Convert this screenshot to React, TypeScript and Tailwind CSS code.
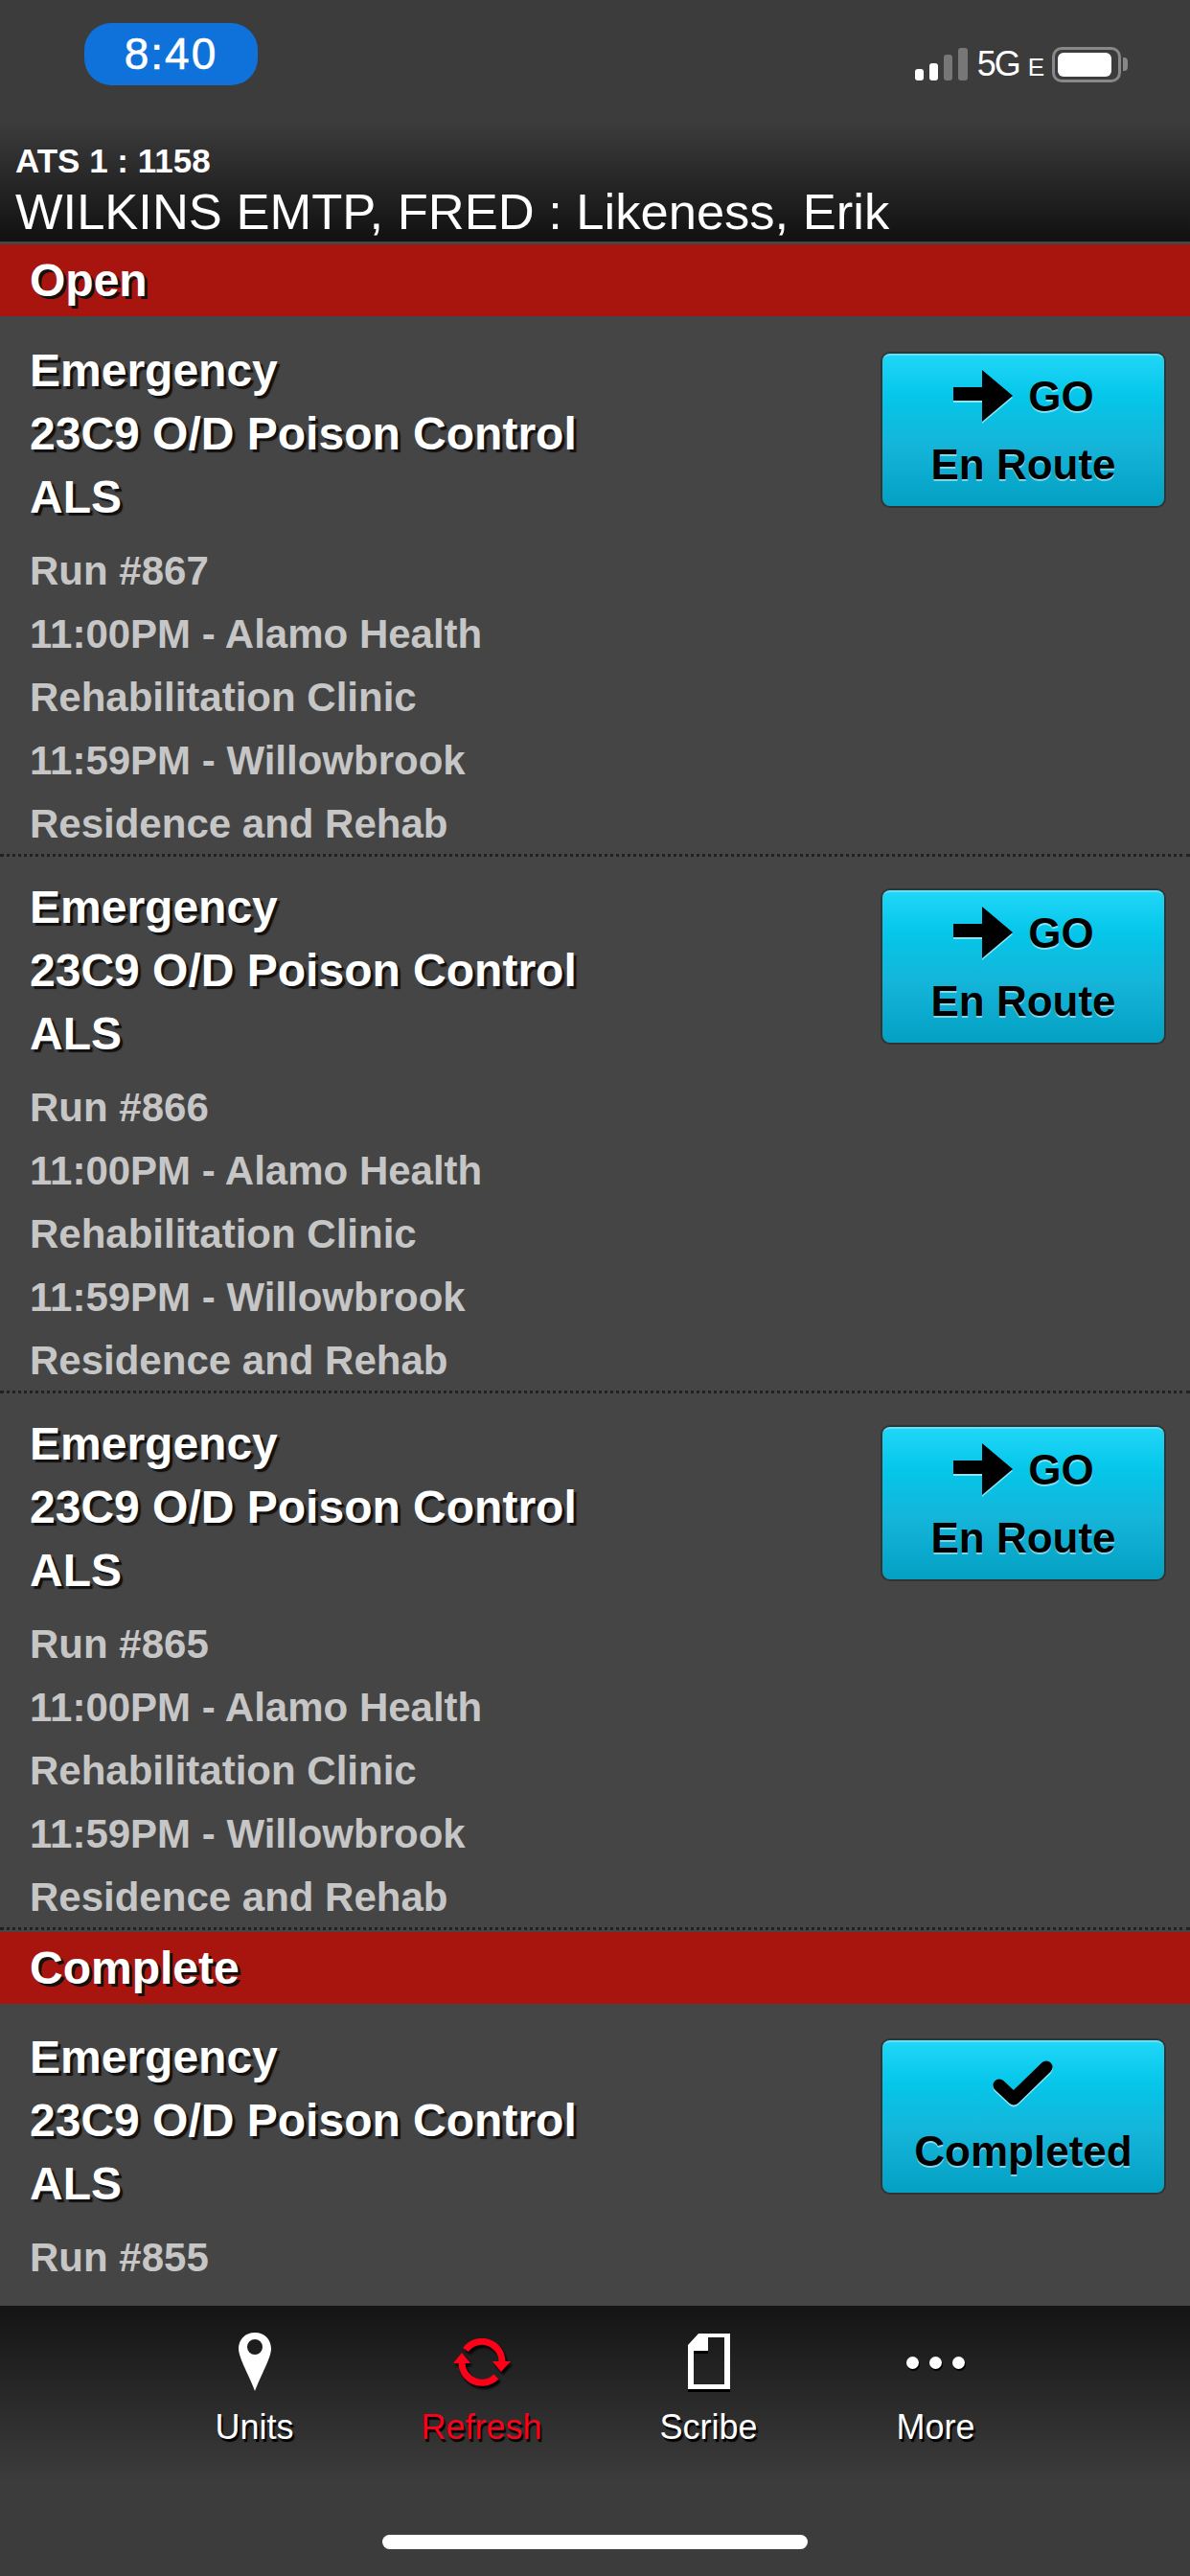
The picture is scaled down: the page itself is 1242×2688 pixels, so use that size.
const FONT = "font-['Liberation_Sans',Arial,sans-serif]";

function ArrowIcon() {
  return (
    <svg width="64" height="58" viewBox="0 0 64 58" className="[filter:drop-shadow(0_2px_0_rgba(255,255,255,0.55))]">
      <path d="M1 19H31V1L63 28L31 55V33H1Z" fill="#000" />
    </svg>
  );
}

function CheckIcon() {
  return (
    <svg width="64" height="50" viewBox="0 0 64 50" className="[filter:drop-shadow(0_2px_0_rgba(255,255,255,0.55))]">
      <path d="M7 27L22 41L56 8" fill="none" stroke="#000" strokeWidth="13" strokeLinecap="round" strokeLinejoin="round" />
    </svg>
  );
}

function ActionButton({ done }: { done?: boolean }) {
  return (
    <div className="flex h-[159px] w-[294px] shrink-0 flex-col items-center rounded-[8px] border-t-2 border-[#5fe2fa] bg-[linear-gradient(180deg,#1fd6f7_0%,#05c6e9_28%,#14b5d9_60%,#03a0c3_100%)] pt-[16px] text-black shadow-[0_0_0_2px_#333333] [text-shadow:0_2px_0_rgba(255,255,255,0.5)]">
      {done ? (
        <div className="flex h-[54px] items-center">
          <CheckIcon />
        </div>
      ) : (
        <div className="flex h-[54px] items-center gap-[15px]">
          <ArrowIcon />
          <span className="text-[44px] font-bold leading-[54px]">GO</span>
        </div>
      )}
      <span className="mt-[17px] text-[44px] font-bold leading-[54px]">{done ? "Completed" : "En Route"}</span>
    </div>
  );
}

function Run({ run, full = true }: { run: string; full?: boolean }) {
  return (
    <div className={`flex justify-between pl-[31px] pr-[27px] pt-[20px] ${full ? "h-[560px] border-b-[3px] border-dotted border-[#222222]" : ""}`}>
      <div className="flex flex-col">
        <div className="flex flex-col pb-[11px] text-[48px] font-bold leading-[66px] text-white [text-shadow:3px_3px_1px_#111111]">
          <span>Emergency</span>
          <span>23C9 O/D Poison Control</span>
          <span>ALS</span>
        </div>
        <div className="flex flex-col text-[42px] font-bold leading-[66px] text-[#c6c6c6]">
          <span>Run #{run}</span>
          {full && (
            <>
              <span>11:00PM - Alamo Health</span>
              <span>Rehabilitation Clinic</span>
              <span>11:59PM - Willowbrook</span>
              <span>Residence and Rehab</span>
            </>
          )}
        </div>
      </div>
      <div className="pt-[15px]">
        <ActionButton done={!full} />
      </div>
    </div>
  );
}

function Section({ title }: { title: string }) {
  return (
    <div className="flex h-[75px] items-center bg-[#a8150f] pl-[31px] text-[48px] font-bold text-white [text-shadow:3px_3px_0_#111111]">
      {title}
    </div>
  );
}

function PinIcon() {
  return (
    <svg width="34" height="62" viewBox="0 0 34 62">
      <path fillRule="evenodd" fill="#fff" d="M17 0C7 0 0 7 0 17C0 26 11 45 17 61C23 45 34 26 34 17C34 7 27 0 17 0ZM17 7A8 8 0 1 1 17 23A8 8 0 1 1 17 7Z" />
    </svg>
  );
}

function RefreshIcon() {
  return (
    <svg width="60" height="50" viewBox="0 0 60 50" fill="none" className="[filter:drop-shadow(2px_3px_1px_#000)]">
      <path d="M13 12A21 21 0 0 1 51 24" stroke="#ff0019" strokeWidth="7" />
      <path d="M45 40A21 21 0 0 1 9 26" stroke="#ff0019" strokeWidth="7" />
      <path d="M0 26L9 15L18 26Z" fill="#ff0019" />
      <path d="M41 24H60L50 35Z" fill="#ff0019" />
    </svg>
  );
}

function DocIcon() {
  return (
    <svg width="44" height="61" viewBox="0 0 44 61" fill="none">
      <path fillRule="evenodd" fill="#fff" d="M11 0H44V58H0V12ZM21 4V18H6V53H38V4Z" />
      <path fill="#000" d="M6 18H21V21H6Z" />
      <path fill="#000" d="M0 58H44V61H0Z" />
    </svg>
  );
}

function Dots() {
  return (
    <div className="flex h-[62px] items-center gap-[11px]">
      <span className="h-[13px] w-[13px] rounded-full bg-white shadow-[1px_2px_0_#000]" />
      <span className="h-[13px] w-[13px] rounded-full bg-white shadow-[1px_2px_0_#000]" />
      <span className="h-[13px] w-[13px] rounded-full bg-white shadow-[1px_2px_0_#000]" />
    </div>
  );
}

function Tab({ label, icon, red }: { label: string; icon: React.ReactNode; red?: boolean }) {
  return (
    <div className={`flex w-[237px] flex-col items-center ${red ? "text-[#ff0019]" : "text-white"}`}>
      <div className="flex h-[62px] items-center">{icon}</div>
      <span className="mt-[14px] text-[36px] leading-[46px] [text-shadow:2px_3px_1px_#000]">{label}</span>
    </div>
  );
}

export default function App() {
  return (
    <div className={`flex h-[2688px] w-[1242px] flex-col overflow-hidden bg-[#454545] ${FONT}`}>
      <header className="h-[252px] shrink-0 bg-[linear-gradient(180deg,#3c3c3c_0%,#3c3c3c_50%,#111111_100%)] px-[16px]">
        <div className="flex h-[148px] items-start justify-between pl-[72px] pr-[49px] pt-[24px]">
          <div className="flex h-[65px] w-[181px] items-center justify-center rounded-[28px] bg-[#0e72da] text-[46px] tracking-[2px] text-white [-webkit-text-stroke:0.6px_white]">
            8:40
          </div>
          <div className="flex items-end pt-[25px] text-white">
            <svg width="55" height="34" viewBox="0 0 55 34">
              <rect x="0" y="22" width="9" height="12" rx="3" fill="#fff" />
              <rect x="15" y="16" width="9" height="18" rx="3" fill="#fff" />
              <rect x="30" y="7" width="9" height="27" rx="3" fill="#777" />
              <rect x="45" y="0" width="10" height="34" rx="3" fill="#777" />
            </svg>
            <span className="ml-[10px] text-[36px] leading-[34px] tracking-[-2px]">5G</span>
            <span className="ml-[9px] text-[26px] leading-[28px]">E</span>
            <div className="-mb-[2px] ml-[8px] flex h-[37px] w-[72px] items-center rounded-[10px] border-[3px] border-[#888888] p-[3px]">
              <div className="h-full w-[56px] rounded-[6px] bg-white" />
            </div>
            <div className="mb-[10px] ml-[2px] h-[14px] w-[5px] rounded-r-[4px] bg-[#888888]" />
          </div>
        </div>
        <div className="text-[35px] font-bold leading-[40px] text-white">ATS 1 : 1158</div>
        <div className="mt-[3px] whitespace-nowrap text-[52.5px] leading-[60px] text-white">WILKINS EMTP, FRED : Likeness, Erik</div>
      </header>
      <main className="mt-[3px] min-h-0 flex-1 overflow-hidden">
        <Section title="Open" />
        <div className="pb-[2px] pt-[4px]">
          <Run run="867" />
          <Run run="866" />
          <Run run="865" />
        </div>
        <Section title="Complete" />
        <div className="pt-[3px]">
          <Run run="855" full={false} />
        </div>
      </main>
      <footer className="h-[282px] shrink-0 bg-[linear-gradient(180deg,#141414_0%,#3c3c3c_65%,#3c3c3c_100%)] pt-[28px]">
        <div className="flex justify-center">
          <Tab label="Units" icon={<PinIcon />} />
          <Tab label="Refresh" red icon={<RefreshIcon />} />
          <Tab label="Scribe" icon={<DocIcon />} />
          <Tab label="More" icon={<Dots />} />
        </div>
        <div className="mx-auto mt-[89px] h-[15px] w-[444px] rounded-full bg-white" />
      </footer>
    </div>
  );
}
